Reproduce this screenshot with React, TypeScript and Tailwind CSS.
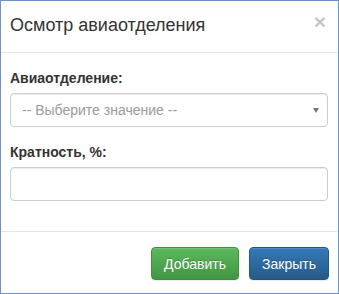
import React from "react";

export default function App() {
  return (
    <div
      className="w-[339px] h-[294px] overflow-hidden bg-white border border-[#6e92c4] flex flex-col text-[#333]"
      style={{ fontFamily: '"Liberation Sans", Arial, sans-serif' }}
    >
      <div className="relative pl-[9px] pr-[9px] pt-[14px] pb-[17px] border-b border-[#e5e5e5]">
        <h4 className="m-0 text-[18px] leading-[20px] font-normal text-[#333]">Осмотр авиаотделения</h4>
        <span className="absolute right-[12px] top-[10px] text-[21px] leading-[21px] font-bold text-[#c6c6c6]">×</span>
      </div>
      <div className="pl-[9px] pr-[9px] pt-[15px] h-[178px]">
        <label className="block text-[14px] leading-[20px] font-bold mb-[5px]">Авиаотделение:</label>
        <div className="relative h-[34px] w-[318px] border border-[#ccc] rounded-[4px] shadow-[inset_0_1px_1px_rgba(0,0,0,0.075)] flex items-center pl-[11px]">
          <span className="text-[14px] leading-[20px] text-[#9a9a9a]">-- Выберите значение --</span>
          <svg className="absolute right-[8px] top-[14px]" width="6" height="5" viewBox="0 0 6 5">
            <polygon points="0,0 6,0 3,5" fill="#777" />
          </svg>
        </div>
        <label className="block text-[14px] leading-[20px] font-bold mt-[15px] mb-[5px]">Кратность, %:</label>
        <div className="h-[34px] w-[318px] border border-[#ccc] rounded-[4px] shadow-[inset_0_1px_1px_rgba(0,0,0,0.075)]" />
      </div>
      <div className="border-t border-[#e5e5e5] pt-[15px] pr-[9px] flex justify-end gap-[10px]">
        <button className="h-[33px] w-[88px] rounded-[4px] border border-[#3e8f3e] bg-[linear-gradient(to_bottom,#5cb85c,#419641)] text-white text-[14px] leading-[20px] shadow-[inset_0_1px_0_rgba(255,255,255,0.15),0_1px_1px_rgba(0,0,0,0.075)] [text-shadow:0_-1px_0_rgba(0,0,0,0.2)]">
          Добавить
        </button>
        <button className="h-[33px] w-[80px] rounded-[4px] border border-[#245580] bg-[linear-gradient(to_bottom,#337ab7,#265a88)] text-white text-[14px] leading-[20px] shadow-[inset_0_1px_0_rgba(255,255,255,0.15),0_1px_1px_rgba(0,0,0,0.075)] [text-shadow:0_-1px_0_rgba(0,0,0,0.2)]">
          Закрыть
        </button>
      </div>
    </div>
  );
}
